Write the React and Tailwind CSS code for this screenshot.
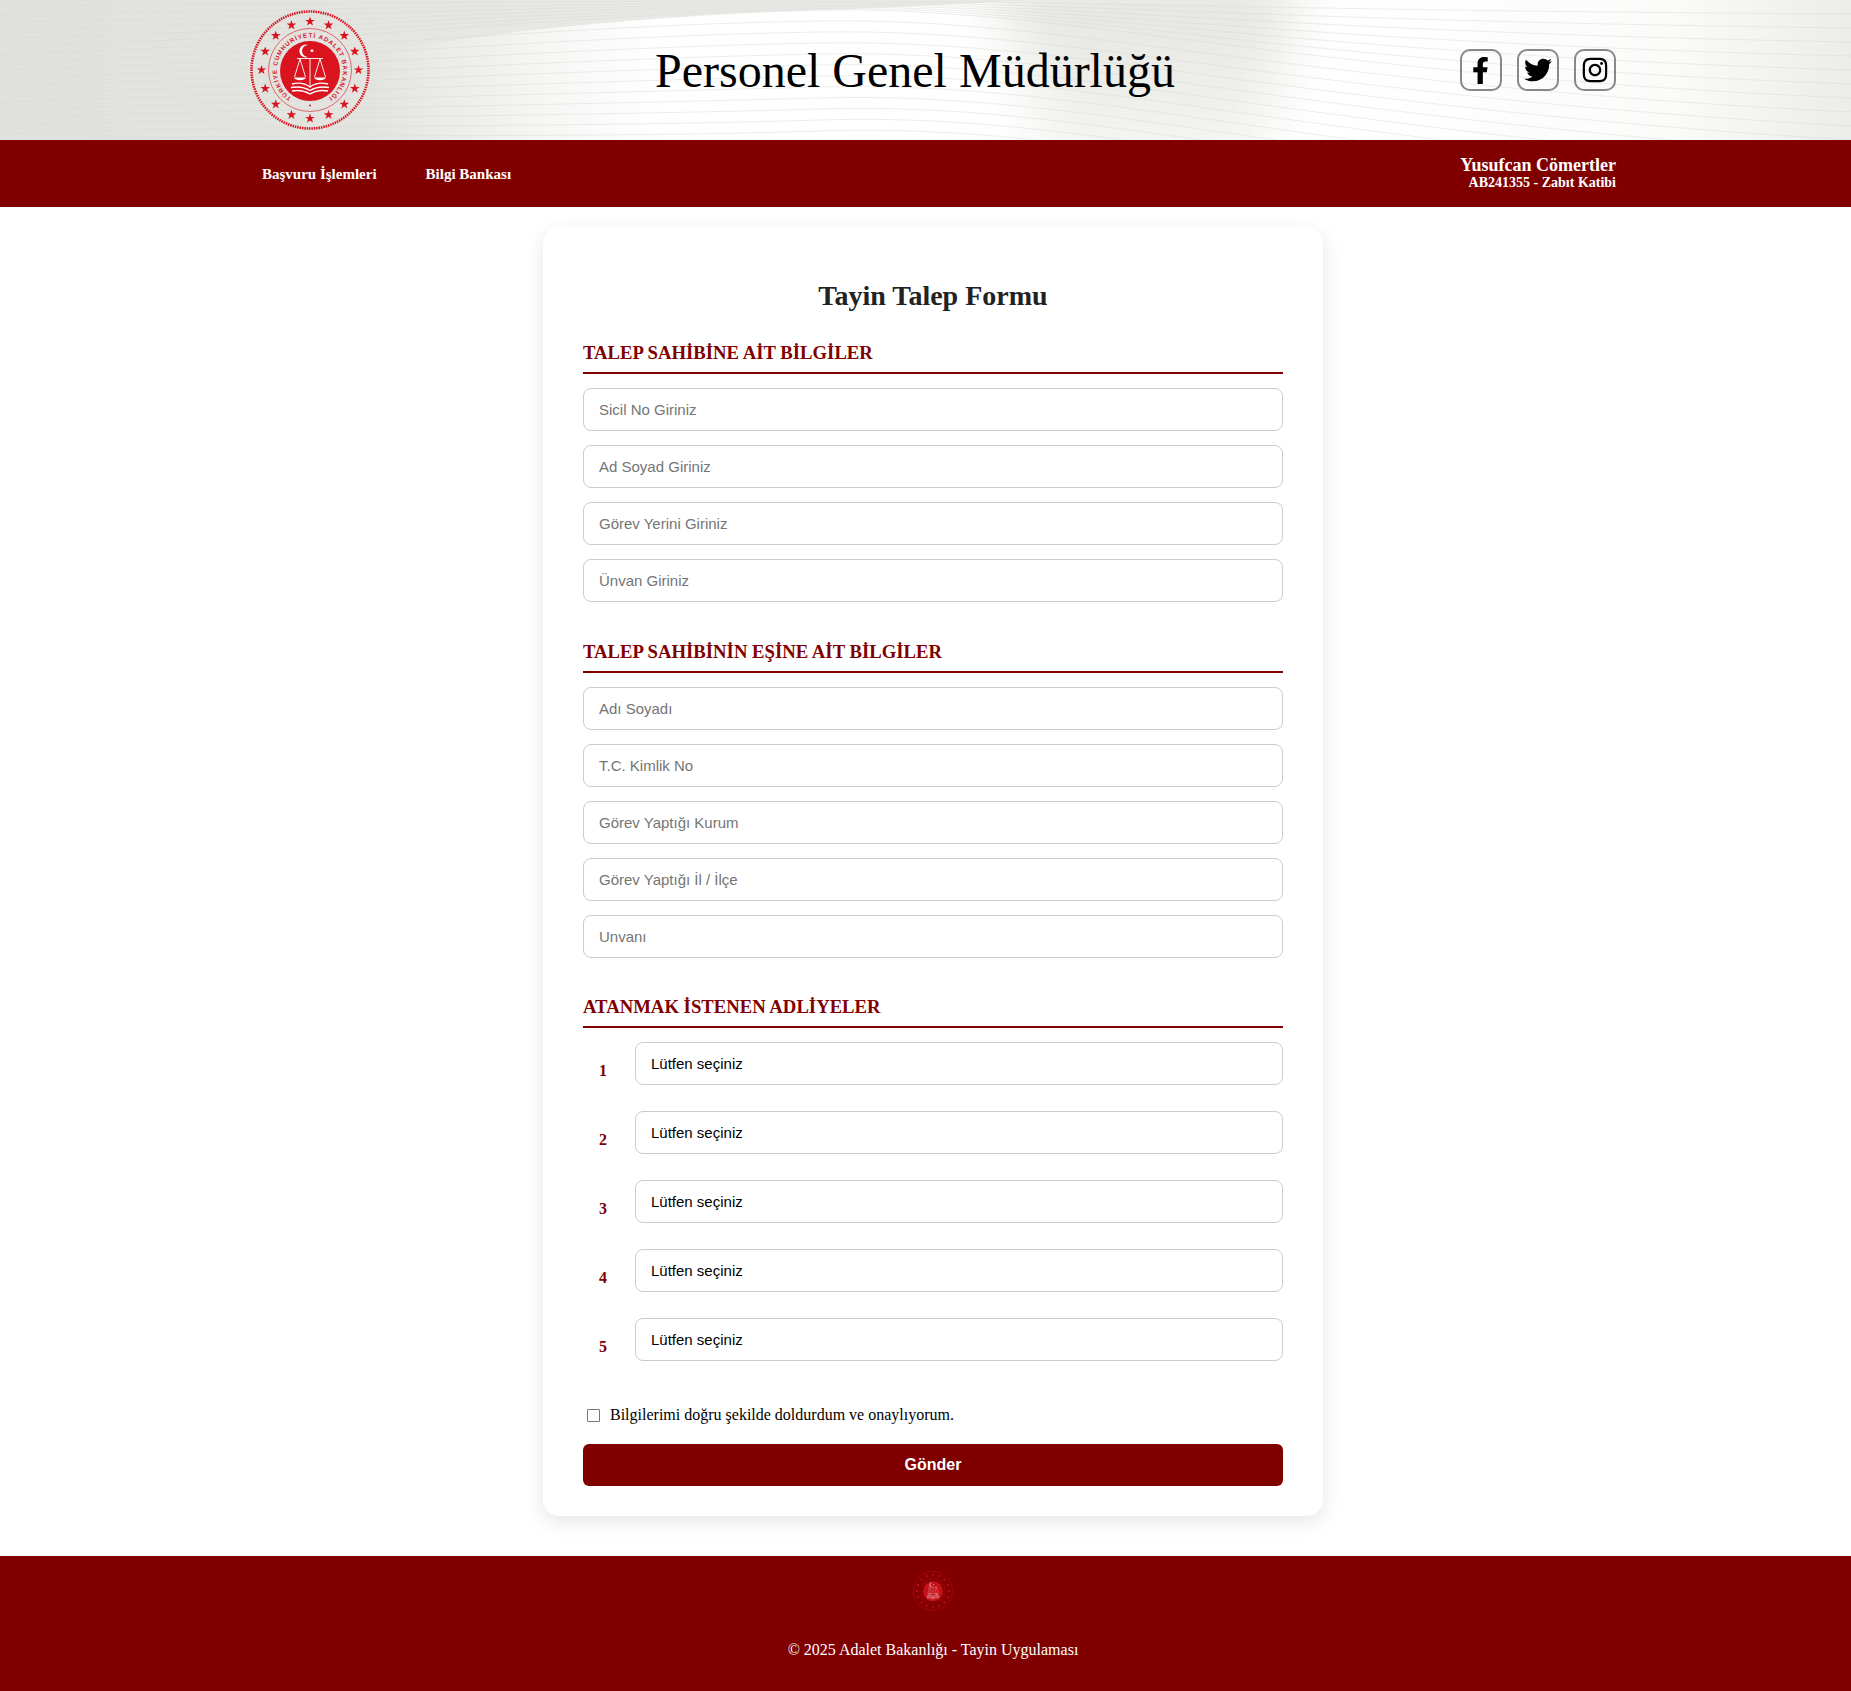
import { FaFacebookF, FaTwitter, FaInstagram } from 'react-icons/fa'

const waveLines = Array.from({ length: 18 }, (_, i) => {
  const mid = i < 7 ? 1 + i * 1.5 : 10 + (i - 6) * 11
  const right = 14 + i * 14
  return `M0 ${6 + i * 8} C260 ${4 + i * 7.5} 560 ${mid + i * 0.5} 820 ${mid} S1280 ${right * 0.75} 1851 ${right}`
})

function HeaderWaves() {
  return (
    <svg className="absolute inset-0 w-full h-full" viewBox="0 0 1851 140" preserveAspectRatio="none" fill="none">
      <defs>
        <linearGradient id="headBg" x1="0" y1="0" x2="1" y2="0">
          <stop offset="0" stopColor="#e1e1de" />
          <stop offset="0.2" stopColor="#e3e3e0" />
          <stop offset="0.3" stopColor="#f7f7f6" />
          <stop offset="0.36" stopColor="#ffffff" />
          <stop offset="0.72" stopColor="#ffffff" />
          <stop offset="0.9" stopColor="#fbfbfa" />
          <stop offset="1" stopColor="#ececea" />
        </linearGradient>
        <linearGradient id="capFill" x1="0" y1="0" x2="1" y2="0">
          <stop offset="0" stopColor="#e3e3e0" />
          <stop offset="0.75" stopColor="#ececea" />
          <stop offset="1" stopColor="#e6e6e3" />
        </linearGradient>
        <linearGradient id="wedgeFill" x1="0" y1="0" x2="0" y2="1">
          <stop offset="0" stopColor="#e2e2de" />
          <stop offset="1" stopColor="#f6f6f4" />
        </linearGradient>
        <filter id="soft" x="-30%" y="-30%" width="160%" height="160%">
          <feGaussianBlur stdDeviation="28" />
        </filter>
      </defs>
      <rect width="1851" height="140" fill="url(#headBg)" />
      <path d="M980 -30 H1300 C1290 40 1270 110 1260 170 H1040 C1040 100 1020 30 980 -30 Z" fill="url(#wedgeFill)" filter="url(#soft)" />
      <path d="M300 72 C380 46 560 20 800 11 C880 8 960 4 1040 0 L300 0 Z" fill="url(#capFill)" />
      {waveLines.map((d, i) => (
        <path key={i} d={d} stroke="#d6d6d3" strokeOpacity="0.45" />
      ))}
    </svg>
  )
}

const stars = Array.from({ length: 16 }, (_, i) => i * 22.5)

function Logo({ size, className }) {
  return (
    <svg width={size} height={size} viewBox="0 0 120 120" className={className}>
      <circle cx="60" cy="60" r="58.5" fill="none" stroke="#d9141f" strokeWidth="2.6" strokeDasharray="1.5 0.9" />
      <circle cx="60" cy="60" r="41.5" fill="none" stroke="#d9141f" strokeWidth="0.6" />
      {stars.map(a => (
        <polygon
          key={a}
          points="0,-5 1.2,-1.6 4.8,-1.6 1.9,0.6 3,4.1 0,2 -3,4.1 -1.9,0.6 -4.8,-1.6 -1.2,-1.6"
          fill="#d9141f"
          transform={`rotate(${a} 60 60) translate(60 11.5) rotate(${-a})`}
        />
      ))}
      <circle cx="60" cy="61" r="30" fill="#d9141f" />
      <defs>
        <path id={`ring${size}`} d="M60 93.5 A33 33 0 1 1 60.01 93.5" />
      </defs>
      <text fontSize="6.2" fontWeight="700" fill="#d9141f" fontFamily="'Liberation Sans', sans-serif">
        <textPath href={`#ring${size}`} startOffset="9.5%" textLength="167" lengthAdjust="spacing">TÜRKİYE CUMHURİYETİ ADALET BAKANLIĞI</textPath>
      </text>
      <circle cx="60" cy="95.5" r="1" fill="#d9141f" />
      <path d="M58 35 A6.4 6.4 0 1 0 58 47 A5.2 5.2 0 1 1 58 35 Z" fill="#fff" />
      <polygon points="62,38.5 62.6,40 64.2,40 62.9,41 63.4,42.6 62,41.6 60.6,42.6 61.1,41 59.8,40 61.4,40" fill="#fff" />
      <path d="M47 48.5 H73 M60 48 V76 M50 49 L44.5 67 M50 49 L55.5 67 M70 49 L64.5 67 M70 49 L75.5 67" stroke="#fff" strokeWidth="0.9" fill="none" />
      <path d="M44 67.5 H56 C55 71 45 71 44 67.5 Z M64 67.5 H76 C75 71 65 71 64 67.5 Z" fill="#fff" />
      <path d="M42 74 C50 72 56 74 60 77 C64 74 70 72 78 74 M41 77.5 C49 76 55 77.5 60 80.5 C65 77.5 71 76 79 77.5 M42 81 C50 79.5 55 81 60 84 C65 81 70 79.5 78 81" stroke="#fff" strokeWidth="1.4" fill="none" />
    </svg>
  )
}

function SocialIcon({ children }) {
  return (
    <a className="flex items-center justify-center w-[42px] h-[42px] border-2 border-[#888888] rounded-[10px] text-black">
      {children}
    </a>
  )
}

function SectionTitle({ children }) {
  return (
    <h3 className="font-bold text-[18.72px] leading-[20px] text-[#800000] pb-[9px] mb-[14px] border-b-2 border-[#800000]">
      {children}
    </h3>
  )
}

function TextField({ placeholder }) {
  return (
    <input
      type="text"
      placeholder={placeholder}
      className="block w-full h-[43px] mb-[14px] px-[15px] bg-white border border-[#cccccc] rounded-[8px] text-[15px] placeholder:text-[#757575] outline-none font-['Liberation_Sans',Arial,sans-serif]"
    />
  )
}

function ChoiceRow({ num }) {
  return (
    <div className="flex items-center mb-[11px]">
      <span className="w-[52px] pl-[16px] font-bold text-[16px] text-[#800000]">{num}</span>
      <select className="flex-1 h-[43px] mb-[15px] pt-[2px] px-[15px] bg-white border border-[#cccccc] rounded-[8px] text-[15px] text-black appearance-none outline-none font-['Liberation_Sans',Arial,sans-serif]">
        <option>Lütfen seçiniz</option>
      </select>
    </div>
  )
}

export default function App() {
  return (
    <div className="min-h-[1691px] bg-white font-['Liberation_Serif','Times_New_Roman',serif] flex flex-col">
      <header className="relative h-[140px] overflow-hidden">
        <HeaderWaves />
        <div className="relative h-full flex items-center justify-between pl-[250px] pr-[235px]">
          <Logo size={120} />
          <h1 className="text-[48px] text-black leading-none pt-[2px]">Personel Genel Müdürlüğü</h1>
          <div className="flex gap-[15px]">
            <SocialIcon><FaFacebookF size={27} /></SocialIcon>
            <SocialIcon><FaTwitter size={28} /></SocialIcon>
            <SocialIcon><FaInstagram size={28} /></SocialIcon>
          </div>
        </div>
      </header>

      <nav className="h-[67px] bg-[#800000] text-white font-bold flex items-center justify-between pl-[262px] pr-[235px]">
        <div className="flex gap-[49px] text-[15px] pt-[1px]">
          <a>Başvuru İşlemleri</a>
          <a>Bilgi Bankası</a>
        </div>
        <div className="text-right">
          <div className="text-[18px] leading-[17px]">Yusufcan Cömertler</div>
          <div className="text-[14px] leading-[17px]">AB241355 - Zabıt Katibi</div>
        </div>
      </nav>

      <main className="pt-[20px] pb-[40px]">
        <form className="w-[780px] ml-[543px] bg-white rounded-[16px] shadow-[0_6px_20px_rgba(0,0,0,0.1)] px-[40px] pt-[53px] pb-[30px]">
          <h2 className="text-[28px] leading-[32px] font-bold text-center text-[#222222] mb-[31px]">Tayin Talep Formu</h2>

          <SectionTitle>TALEP SAHİBİNE AİT BİLGİLER</SectionTitle>
          <TextField placeholder="Sicil No Giriniz" />
          <TextField placeholder="Ad Soyad Giriniz" />
          <TextField placeholder="Görev Yerini Giriniz" />
          <TextField placeholder="Ünvan Giriniz" />

          <div className="h-[26px]" />
          <SectionTitle>TALEP SAHİBİNİN EŞİNE AİT BİLGİLER</SectionTitle>
          <TextField placeholder="Adı Soyadı" />
          <TextField placeholder="T.C. Kimlik No" />
          <TextField placeholder="Görev Yaptığı Kurum" />
          <TextField placeholder="Görev Yaptığı İl / İlçe" />
          <TextField placeholder="Unvanı" />

          <div className="h-[25px]" />
          <SectionTitle>ATANMAK İSTENEN ADLİYELER</SectionTitle>
          <ChoiceRow num="1" />
          <ChoiceRow num="2" />
          <ChoiceRow num="3" />
          <ChoiceRow num="4" />
          <ChoiceRow num="5" />

          <label className="flex items-center mt-[27px] mb-[17px] pl-[4px] text-[16px] text-black">
            <input type="checkbox" className="w-[13px] h-[13px] mr-[10px] appearance-none border border-[#767676] rounded-[1px] bg-white" />
            Bilgilerimi doğru şekilde doldurdum ve onaylıyorum.
          </label>

          <button type="button" className="block w-full h-[42px] bg-[#800000] text-white font-bold text-[16px] rounded-[6px] font-['Liberation_Sans',Arial,sans-serif]">
            Gönder
          </button>
        </form>
      </main>

      <footer className="flex-1 bg-[#800000] text-white text-center pt-[15px] pl-[15px]">
        <div className="flex justify-center">
          <Logo size={40} className="opacity-80" />
        </div>
        <p className="mt-[27px] text-[16px]">© 2025 Adalet Bakanlığı - Tayin Uygulaması</p>
      </footer>
    </div>
  )
}
